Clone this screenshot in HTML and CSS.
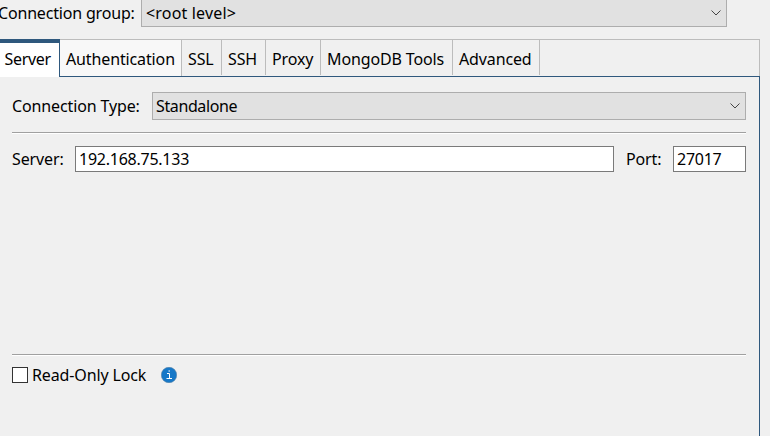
FILE: index.html
```html
<!DOCTYPE html>
<html lang="en"><head><meta charset="utf-8"><title>Connection</title><link rel="stylesheet" href="styles.css"></head>
<body>
<div class="group"><label class="group-label"><span>Connection group:</span></label><div class="combo group-combo"><span>&lt;root level&gt;</span><svg class="chev" viewBox="0 0 12 8"><path d="M1.5 1.5 6 6 10.5 1.5"/></svg></div></div>
<div class="tabs"><div class="tab active"><span>Server</span></div><div class="tab auth"><span>Authentication</span></div><div class="tab ssl"><span>SSL</span></div><div class="tab ssh"><span>SSH</span></div><div class="tab proxy"><span>Proxy</span></div><div class="tab tools"><span>MongoDB Tools</span></div><div class="tab adv"><span>Advanced</span></div><div class="rest"></div></div>
<div class="panel">
<div class="row type"><label>Connection Type:</label><div class="combo"><span>Standalone</span><svg class="chev" viewBox="0 0 12 8"><path d="M1.5 1.5 6 6 10.5 1.5"/></svg></div></div>
<div class="rule"></div>
<div class="row server"><label>Server:</label><div class="field host">192.168.75.133</div><label class="port-label">Port:</label><div class="field port">27017</div></div>
<div class="rule bottom"></div>
<div class="row lock"><i class="check"></i><span>Read-Only Lock</span><svg class="info" viewBox="0 0 16 16"><circle cx="8" cy="8" r="7.7" fill="#1678c8" stroke="#5380a5" stroke-width=".6"/><path d="M6 6.5H8.5V11.5M5.5 11.5H11M7.5 4H9" fill="none" stroke="#fff"/></svg></div>
</div>
</body></html>
```
FILE: styles.css
```css
*{box-sizing:border-box}
body{margin:0;width:770px;height:436px;overflow:hidden;background:#f0f0f0;color:#000;font:16px/26px "Noto Sans","Noto Sans CJK SC",sans-serif;letter-spacing:-.13px;white-space:nowrap}
.group{display:flex;height:27px}
.group-label{width:141px;margin-left:-2px;margin-right:2px;letter-spacing:-.18px}
.combo{display:flex;align-items:center;justify-content:space-between;flex:1;background:#e1e1e1;border:1px solid #adadad;padding:0 4px 0 3px;letter-spacing:-.38px}
.group-combo{flex:none;width:586px;border-top:0;padding-left:4px;letter-spacing:.18px}
.chev{width:12px;height:8px;fill:none;stroke:#444}
.tabs{display:flex;height:38px;margin-top:12px;width:760px;background:linear-gradient(#2f587d,#2f587d) 0 100%/100% 1px no-repeat}
.tab{height:36px;border:1px solid #bcbcbc;border-left:0;border-bottom:0;padding:6px 0 0 6px}
.active{width:60px;height:38px;background:#fff;border-top:4px solid #2f587d;border-right-color:#2f587d;padding:3px 0 0 4.5px;letter-spacing:-.3px}
.auth{width:122px;background:#f8f8f8;height:37px;border-right-color:#bcbcbc}.ssl{width:40px}.ssh{width:44px}.proxy{width:55px}.tools{width:132px}.adv{width:87px}
.rest{flex:1;height:37px;border-top:1px solid #bcbcbc;border-right:1px solid #bcbcbc}
.panel{width:760px;height:359px;border-right:1px solid #2f587d;padding:15px 13px 0 12px}
.row{display:flex}
.type{height:28px}.type label{width:140px;line-height:28px}
.rule{height:2px;background:#fff;border-top:1px solid #a0a0a0;margin-top:12px}
.server{margin-top:12px;height:26px}.server label{width:63px}
.field{background:#fff;border:1px solid #7a7a7a;padding-left:3px;line-height:24px;letter-spacing:-.25px}
.host{width:539px}.server .port-label{width:59px;padding-left:12px}.port{width:73px}
.bottom{margin-top:182px}
.lock{align-items:center;margin-top:6px;height:26px}
.check{width:16px;height:16px;background:#fff;border:1px solid #333;margin-right:4px}
.lock span{width:114px}
.info{width:16px;height:16px;margin-left:15px}
```
